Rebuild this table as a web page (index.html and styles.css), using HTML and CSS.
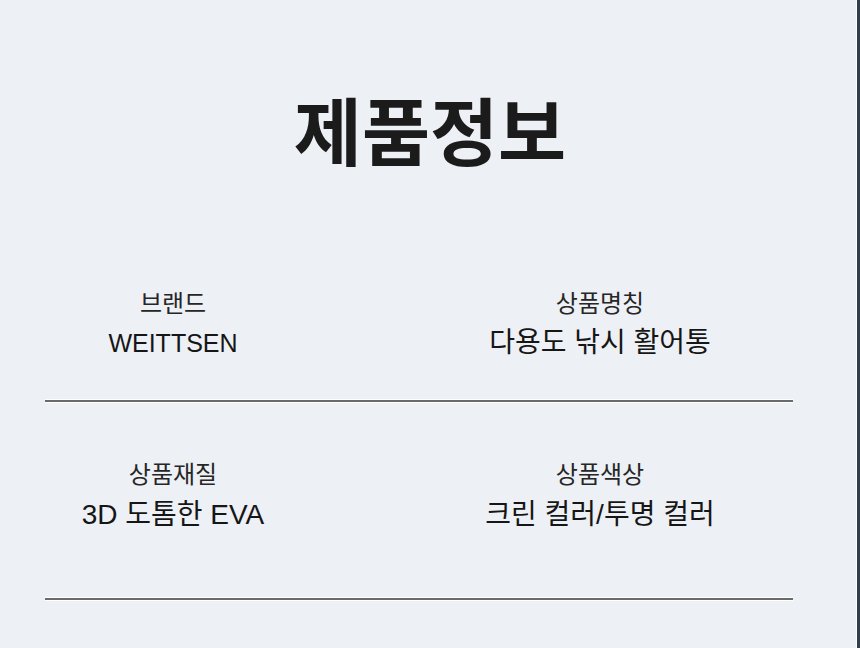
FILE: index.html
```html
<!DOCTYPE html>
<html lang="ko">
<head>
<meta charset="utf-8">
<title>제품정보</title>
<link rel="stylesheet" href="styles.css">
</head>
<body>
<div class="page">
  <main class="content">
    <h1 class="title">제품정보</h1>
    <section class="specs">
      <div class="spec-row first">
        <div class="spec left">
          <div class="label">브랜드</div>
          <div class="value latin">WEITTSEN</div>
        </div>
        <div class="spec right">
          <div class="label">상품명칭</div>
          <div class="value">다용도 낚시 활어통</div>
        </div>
      </div>
      <hr class="divider first-divider">
      <div class="spec-row second">
        <div class="spec left">
          <div class="label">상품재질</div>
          <div class="value">3D 도톰한 EVA</div>
        </div>
        <div class="spec right">
          <div class="label">상품색상</div>
          <div class="value">크린 컬러/투명 컬러</div>
        </div>
      </div>
      <hr class="divider second-divider">
    </section>
  </main>
  <div class="edge"></div>
</div>
</body>
</html>
```

FILE: styles.css
```css
html, body {
  margin: 0;
  padding: 0;
}

body {
  background: #edf0f5;
  font-family: "Liberation Sans", "Noto Sans CJK KR", sans-serif;
  color: #222;
}

.page {
  width: 860px;
  height: 648px;
  display: flex;
  overflow: hidden;
}

.content {
  flex: 1;
  padding-top: 91px;
}

.edge {
  width: 3px;
  border-left: 1px solid #ffffff;
  background: #2f3f4c;
}

.title {
  margin: 0;
  font-family: "Noto Sans CJK KR", sans-serif;
  font-weight: 700;
  font-size: 74px;
  line-height: 74px;
  letter-spacing: 0;
  text-align: center;
  color: #1b1b1b;
  padding-left: 4px;
}

.specs {
  padding-left: 45px;
  width: 748px;
}

.spec-row {
  display: grid;
  grid-template-columns: 256px 260px;
  column-gap: 169px;
}

.spec-row.first {
  margin-top: 122px;
}

.spec-row.second {
  margin-top: 56px;
}

.spec {
  display: flex;
  flex-direction: column;
  align-items: center;
  gap: 9px;
}

.spec-row.second .spec {
  gap: 10px;
}

.label {
  font-family: "Noto Sans CJK KR", sans-serif;
  font-weight: 400;
  font-size: 24px;
  line-height: 30px;
  color: #262626;
  white-space: nowrap;
}

.value {
  font-weight: 400;
  font-size: 28px;
  line-height: 34px;
  color: #161616;
  white-space: nowrap;
}

.value.latin {
  font-size: 25px;
}

.divider {
  margin: 0;
  border: 0;
  height: 2px;
  background: #6a6a6a;
  box-shadow: 0 -1px 0 #ffffff, 0 1px 0 #ffffff;
}

.first-divider {
  margin-top: 40px;
}

.second-divider {
  margin-top: 66px;
}
```
